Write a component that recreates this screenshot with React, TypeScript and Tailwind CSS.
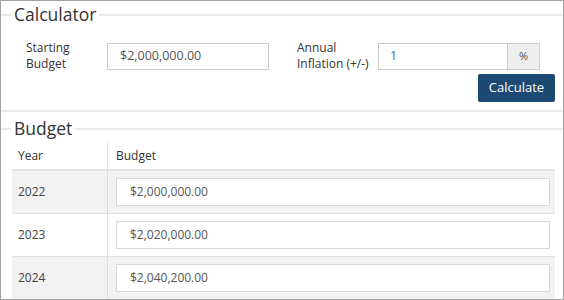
const rows = [
  { year: '2022', value: '$2,000,000.00', shade: true },
  { year: '2023', value: '$2,020,000.00', shade: false },
  { year: '2024', value: '$2,040,200.00', shade: true },
];

const Legend = ({ title }: { title: string }) => (
  <div className="flex h-[28px] items-center">
    <div className="h-[2px] w-[10px] bg-[#e8e8e8]" />
    <span className="px-[3px] text-[17.5px] leading-none text-[#333]">{title}</span>
    <div className="h-[2px] flex-1 bg-[#e8e8e8]" />
  </div>
);

const App = (): JSX.Element => {
  return (
    <div className="h-[300px] w-[564px] overflow-hidden border border-[#a3a3a3] bg-white font-['Open_Sans',sans-serif] text-[#333]">
      <div className="h-[111px] border-b-2 border-[#e8e8e8]">
        <Legend title="Calculator" />
        <div className="mt-[11px] flex items-center pl-[25px]">
          <label className="w-[81px] text-[12px] leading-[16px]">
            Starting
            <br />
            Budget
          </label>
          <div className="flex h-[27px] w-[162px] items-center border border-[#ccc] px-[12px] text-[12.5px] text-[#555]">
            $2,000,000.00
          </div>
          <label className="ml-[28px] w-[81px] text-[12px] leading-[16px]">
            Annual
            <br />
            Inflation (+/-)
          </label>
          <div className="flex h-[27px] w-[162px]">
            <div className="flex flex-1 items-center border border-[#ccc] px-[11px] text-[12.5px] text-[#3b6ea5]">1</div>
            <div className="flex w-[32px] items-center justify-center border border-l-0 border-[#ccc] bg-[#eee] text-[11px] text-[#555]">
              %
            </div>
          </div>
        </div>
        <div className="mt-[2px] flex justify-end pr-[8px]">
          <button className="h-[28px] w-[77px] rounded-[2px] bg-[#1d4a72] text-[13px] text-white">Calculate</button>
        </div>
      </div>
      <div className="pt-[3px]">
        <Legend title="Budget" />
        <div className="mx-[11px] mr-[8px] text-[12px]">
          <div className="flex h-[28px] border-b-2 border-[#e3e3e3]">
            <div className="flex w-[95px] items-center pl-[6px]">Year</div>
            <div className="flex flex-1 items-center border-l border-[#ddd] pl-[8px]">Budget</div>
          </div>
          {rows.map((r) => (
            <div
              key={r.year}
              className={`flex h-[43px] border-b border-[#e3e3e3] ${r.shade ? 'bg-[#f2f2f2]' : 'bg-white'}`}
            >
              <div className="flex w-[95px] items-center pl-[6px] text-[#444]">{r.year}</div>
              <div className="flex flex-1 items-center border-l border-[#ddd] pl-[8px] pr-[5px]">
                <div className="flex h-[28px] w-full items-center border border-[#d5d8dc] bg-white px-[13px] text-[#555]">
                  {r.value}
                </div>
              </div>
            </div>
          ))}
        </div>
      </div>
    </div>
  );
};

export default App;
